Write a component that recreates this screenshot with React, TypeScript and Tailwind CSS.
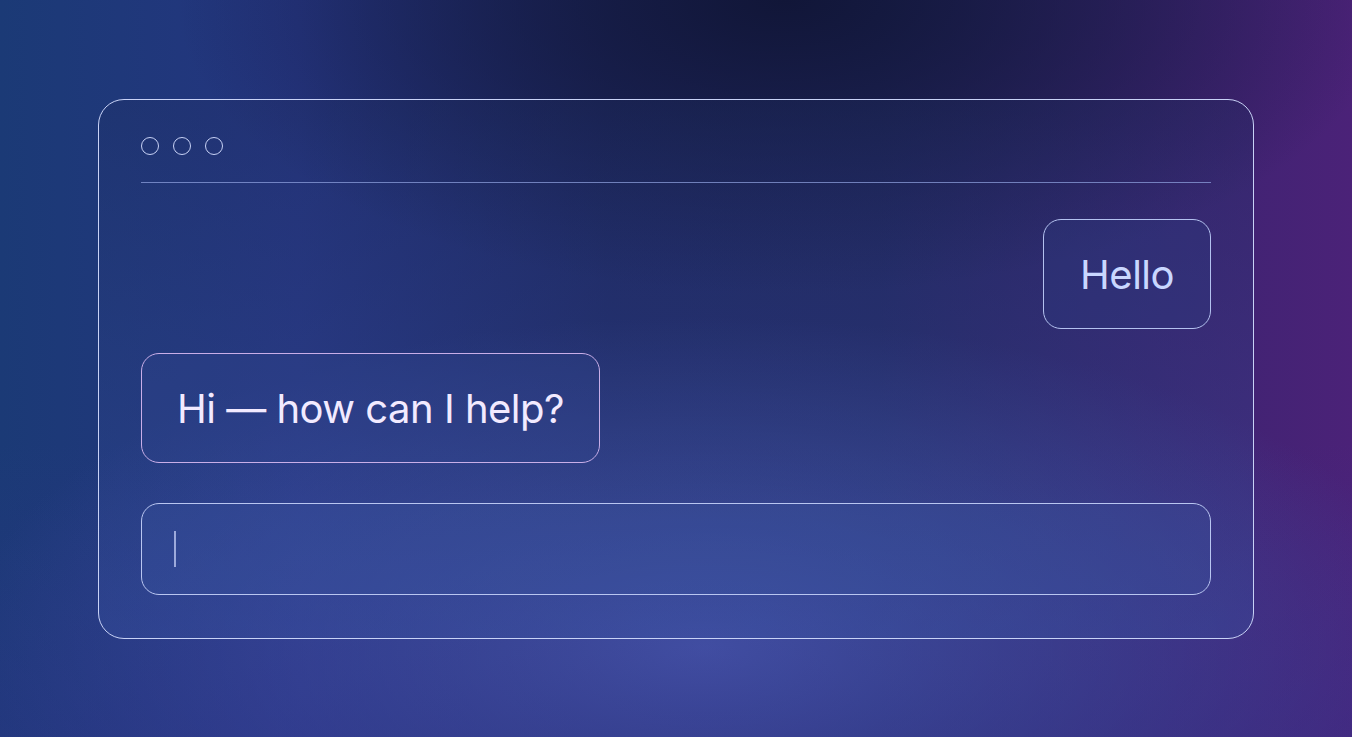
import React from "react";

export default function App() {
  return (
    <div className="relative flex h-[737px] w-full items-center justify-center overflow-hidden bg-[radial-gradient(ellipse_55%_45%_at_52%_88%,rgba(72,88,172,0.95),rgba(72,88,172,0)_100%),radial-gradient(ellipse_45%_40%_at_58%_0%,rgba(17,22,56,1),rgba(17,22,56,0)_100%),linear-gradient(90deg,#1b3a76_0%,#253580_22%,#1f2964_45%,#232863_65%,#3a2470_85%,#4b2278_100%)] font-[Inter,sans-serif]">
      <div className="pointer-events-none absolute inset-0 bg-[linear-gradient(180deg,rgba(0,0,0,0)_0%,rgba(0,0,0,0)_60%,rgba(48,50,140,0.35)_100%)]" />
      <div className="relative flex h-[540px] w-[1156px] flex-col rounded-[26px] border-[1.5px] border-[#c8d2f6] bg-[linear-gradient(180deg,rgba(30,44,96,0.3)_0%,rgba(55,80,160,0.35)_100%)] px-[42px] pt-[37px] pb-[43px]">
        <div className="flex gap-[14px]">
          <span className="h-[18px] w-[18px] rounded-full border-[1.5px] border-[#c8d2f6]" />
          <span className="h-[18px] w-[18px] rounded-full border-[1.5px] border-[#c8d2f6]" />
          <span className="h-[18px] w-[18px] rounded-full border-[1.5px] border-[#c8d2f6]" />
        </div>
        <div className="mt-[27px] h-px w-full bg-[#93a5e2]/70" />
        <div className="mt-[37px] flex justify-end">
          <div className="flex h-[110px] items-center rounded-[18px] border-[1.5px] border-[#b3c1ef] bg-[#2c3d80]/30 px-[36px] pt-[2px] text-[40px] leading-none tracking-[-0.5px] text-[#c9d7ff]">
            Hello
          </div>
        </div>
        <div className="mt-[24px] flex justify-start">
          <div className="flex h-[110px] items-center rounded-[18px] border-[1.5px] border-[#c9aee8] bg-[#33458e]/30 px-[35px] pt-[2px] text-[40px] leading-none tracking-[-0.5px] text-[#f2eaff]">
            Hi — how can I help?
          </div>
        </div>
        <div className="mt-[40px] flex h-[92px] items-center rounded-[18px] border-[1.5px] border-[#b9c6f1] bg-[#3a58a4]/25 px-[32px]">
          <span className="h-[36px] w-[2px] bg-[#b9c3ee]/80" />
        </div>
      </div>
    </div>
  );
}
